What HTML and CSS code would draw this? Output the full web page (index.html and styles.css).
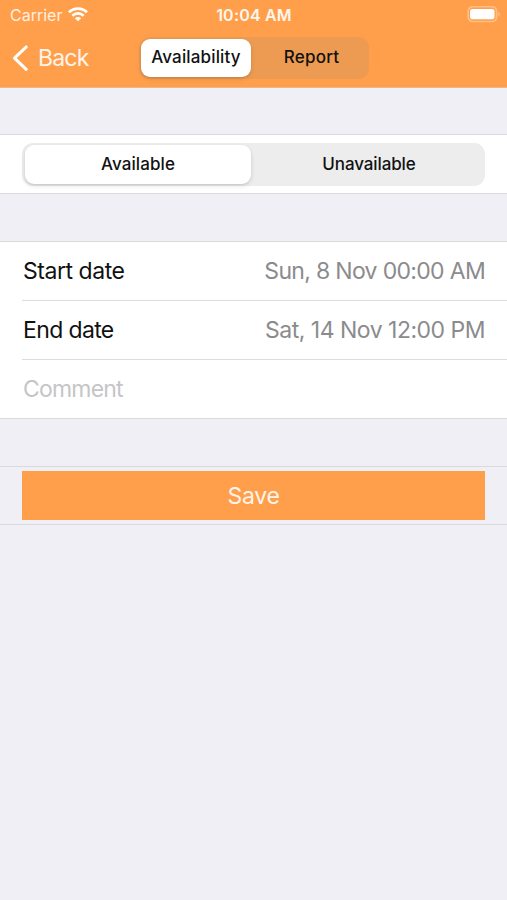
FILE: index.html
```html
<!DOCTYPE html>
<html lang="en">
<head>
<meta charset="utf-8">
<title>Availability</title>
<link rel="stylesheet" href="styles.css">
</head>
<body>
<header class="header">
  <div class="status">
    <div class="carrier"><span>Carrier</span>
      <svg class="wifi" width="20" height="15" viewBox="0 0 20 15" fill="none" stroke="#fff" stroke-width="2.7"><path d="M1 5.3C6.2.4 13.8.4 19 5.3M4.3 8.7c3.3-3 8.1-3 11.4 0"/><path d="M10 14.3 6.8 11.3c1.8-1.7 4.6-1.7 6.4 0Z" fill="#fff" stroke="none"/></svg>
    </div>
    <span class="time">10:04 AM</span>
    <svg class="battery" width="34" height="18" viewBox="0 0 34 18"><rect x="1.2" y=".7" width="28.4" height="14.8" rx="4.5" fill="none" stroke="#fff" stroke-opacity=".33" stroke-width="1.7"/><rect x="3" y="3" width="24.5" height="10.2" rx="2.2" fill="#fff"/><path d="M31.4 5.9c1.7.8 1.7 3.7 0 4.5Z" fill="#fff" fill-opacity=".4"/></svg>
  </div>
  <nav class="nav">
    <a class="back"><svg width="18" height="28" viewBox="0 0 18 28" fill="none" stroke="#fff" stroke-width="3.1" stroke-linecap="round" stroke-linejoin="round"><path d="M15.2 3 3.5 14.2 15.2 25.3"/></svg><span>Back</span></a>
    <div class="segments nav-segments"><div class="segment selected"><span>Availability</span></div><div class="segment report"><span>Report</span></div></div>
  </nav>
</header>
<main>
  <section class="group switcher">
    <div class="segments wide-segments"><div class="segment selected"><span>Available</span></div><div class="segment unavailable"><span>Unavailable</span></div></div>
  </section>
  <section class="group">
    <div class="row"><span class="label-start">Start date</span><span class="value value-start">Sun, 8 Nov 00:00 AM</span></div>
    <div class="row"><span class="label-end">End date</span><span class="value value-end">Sat, 14 Nov 12:00 PM</span></div>
    <div class="row"><span class="placeholder">Comment</span></div>
  </section>
  <section class="group action"><button class="save">Save</button></section>
</main>
</body>
</html>
```
FILE: styles.css
```css
* { box-sizing: border-box; }
body { margin: 0; min-height: 900px; background: #f0eff5; color: #111; font-family: Inter, "Liberation Sans", sans-serif; font-size: 23px; overflow: hidden; }
span { white-space: nowrap; }
.header { height: 88px; background: #ff9f4b; color: #fff; border-bottom: 1px solid #e7b88e; }
.status { height: 30px; display: grid; grid-template-columns: 1fr auto 1fr; align-items: center; padding: 0 6px 0 10px; font-size: 16px; }
.carrier { display: flex; align-items: center; gap: 6px; color: #fff0e2; }
.wifi { margin-top: -1px; }
.time { font-weight: 600; font-size: 16px; letter-spacing: .2px; margin-left: -3px; color: #fff6ee; }
.battery { justify-self: end; margin-top: -1px; }
.nav { display: flex; align-items: center; height: 55px; }
.back { display: flex; align-items: center; width: 139px; padding-left: 11px; gap: 9px; color: #fff4e9; letter-spacing: -.8px; }
.segments { display: grid; grid-template-columns: 1fr 1fr; padding: 2px; color: #111; }
.segment { display: flex; align-items: center; justify-content: center; padding-bottom: 2px; font-weight: 500; font-size: 17px; }
.selected { background: #fff; border-radius: 9px; box-shadow: 0 2px 5px rgba(0,0,0,.11), 0 1px 2px rgba(0,0,0,.08); }
.nav-segments { width: 230px; height: 42px; border-radius: 11px; background: #ed9b52; grid-template-columns: 110px 1fr; }
.nav-segments .selected { letter-spacing: .15px; }
.report { padding-left: 5px; letter-spacing: .2px; }
.wide-segments { width: 463px; height: 43px; border-radius: 11px; background: #ededee; grid-template-columns: 226px 1fr; padding-left: 3px; }
.wide-segments .selected { letter-spacing: .1px; }
.unavailable { padding-left: 4px; letter-spacing: -.1px; }
.group { margin-top: 46px; background: #fff; border-top: 1px solid #dadadd; border-bottom: 1px solid #dadadd; }
.group + .group { margin-top: 47px; }
.switcher { height: 60px; padding: 8px 22px; }
.row { display: flex; align-items: center; justify-content: space-between; height: 59px; margin-left: 22px; padding: 0 22px 1px 1px; }
.row:first-child { height: 58px; }
.row + .row { border-top: 1px solid #dddddf; }
.label-start { letter-spacing: -.45px; }
.label-end { letter-spacing: -.63px; }
.value { color: #8b8b8d; }
.value-start { letter-spacing: -.68px; }
.value-end { letter-spacing: -.5px; }
.placeholder { color: #c5c5c7; letter-spacing: -.8px; }
.action { height: 59px; padding: 4px 22px; background: #f0eff5; }
.save { display: block; width: 100%; height: 49px; padding: 1px 0 0; border: 0; border-radius: 0; background: #ff9f4b; color: #fff4e9; font: inherit; letter-spacing: -.3px; }
```
